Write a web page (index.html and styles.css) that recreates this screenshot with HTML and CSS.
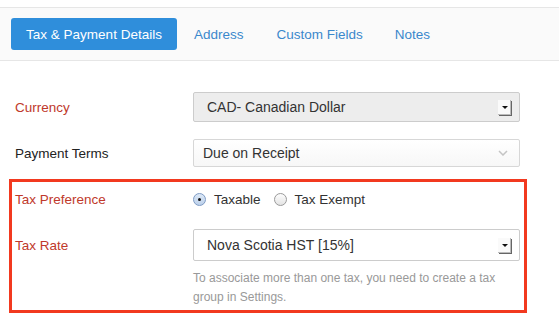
FILE: index.html
```html
<!DOCTYPE html>
<html lang="en">
<head>
    <meta charset="UTF-8">
    <title>Customer Details</title>
    <link rel="stylesheet" href="styles.css">
</head>
<body>
    <div class="tabs">
        <button class="tab active">Tax &amp; Payment Details</button>
        <a class="tab tab-address">Address</a>
        <a class="tab tab-custom">Custom Fields</a>
        <a class="tab">Notes</a>
    </div>

    <div class="form">
        <div class="row row-currency">
            <label class="required">Currency</label>
            <div class="select select-old select-grey">
                <span>CAD- Canadian Dollar</span>
                <span class="arrow-box"></span>
            </div>
        </div>

        <div class="row row-terms">
            <label>Payment Terms</label>
            <div class="select select-new">
                <span>Due on Receipt</span>
                <svg class="chevron" width="10" height="6" viewBox="0 0 10 6">
                    <path d="M1 1 L5 5 L9 1" fill="none" stroke="#c4c4c4" stroke-width="1.5"/>
                </svg>
            </div>
        </div>

        <div class="highlight">
            <div class="row row-pref">
                <label class="required">Tax Preference</label>
                <div class="radios">
                    <span class="radio checked"></span>
                    <span class="radio-label">Taxable</span>
                    <span class="radio"></span>
                    <span class="radio-label">Tax Exempt</span>
                </div>
            </div>

            <div class="row row-rate">
                <label class="required">Tax Rate</label>
                <div class="select select-old">
                    <span>Nova Scotia HST [15%]</span>
                    <span class="arrow-box"></span>
                </div>
            </div>

            <p class="help">To associate more than one tax, you need to create a tax group in Settings.</p>
        </div>
    </div>
</body>
</html>
```

FILE: styles.css
```css
body {
    margin: 0;
    background: #fff;
    font-family: "Liberation Sans", Arial, sans-serif;
    font-size: 13.5px;
    color: #333;
}
.tabs {
    margin-top: 7px;
    height: 52px;
    background: #fafafa;
    border-top: 1px solid #e6e6e6;
    border-bottom: 1px solid #e6e6e6;
    display: flex;
    align-items: center;
    padding-left: 11px;
}
.tab {
    font-family: inherit;
    font-size: 13.5px;
    color: #3b88cc;
    margin-right: 33px;
}
.tab.active {
    background: #2f8edb;
    color: #fff;
    border: none;
    border-radius: 3px;
    height: 32px;
    width: 166px;
    margin-right: 17px;
    padding: 0;
}
.tab-address {
    margin-right: 33px;
}
.tab-custom {
    margin-right: 32px;
}
.form {
    padding-top: 31px;
}
.row {
    display: flex;
    align-items: center;
    padding-left: 15px;
}
.row label {
    width: 178px;
    flex: none;
    color: #222;
}
.row label.required {
    color: #c0392b;
}
.row-terms {
    margin-top: 17px;
}
.select {
    width: 327px;
    box-sizing: border-box;
    border: 1px solid #ccc;
    border-radius: 2px;
    display: flex;
    align-items: center;
    justify-content: space-between;
    font-size: 14px;
    color: #333;
}
.select-old {
    height: 32px;
    padding: 0 8px 0 13px;
}
.select-grey {
    height: 30px;
    background: #ededed;
}
.select-new {
    height: 28px;
    padding: 0 11px 0 9px;
    border-color: #d7d7d7;
    background: linear-gradient(#fff, #f7f7f7);
}
.arrow-box {
    width: 13px;
    height: 15px;
    background: #fafafa;
    box-shadow: 1px 1px 0 #666, inset -1px -1px 0 #bbb;
    position: relative;
}
.arrow-box::after {
    content: "";
    position: absolute;
    left: 4px;
    top: 6px;
    border-left: 3px solid transparent;
    border-right: 3px solid transparent;
    border-top: 3px solid #111;
}
.highlight {
    margin: 12px 0 0 9px;
    width: 518px;
    box-sizing: border-box;
    border: 3px solid #f2391f;
    padding: 7px 0 3px 0;
}
.highlight .row {
    padding-left: 3px;
}
.radios {
    display: flex;
    align-items: center;
    height: 20px;
    font-size: 13.5px;
}
.radio {
    width: 11px;
    height: 11px;
    border: 1px solid #9a9a9a;
    border-radius: 50%;
    background: linear-gradient(#fdfdfd, #e4e4e4);
    position: relative;
    margin-right: 8px;
}
.radio.checked {
    border-color: #7d9ac4;
    background: linear-gradient(#dde9f7, #bcd0ea);
}
.radio.checked::after {
    content: "";
    position: absolute;
    left: 4px;
    top: 4px;
    width: 3px;
    height: 3px;
    border-radius: 50%;
    background: #111;
}
.radio-label {
    margin-right: 13px;
}
.row-rate {
    margin-top: 20px;
}
.help {
    margin: 8px 0 0 181px;
    width: 305px;
    font-size: 12px;
    line-height: 19px;
    color: #999;
}
```
